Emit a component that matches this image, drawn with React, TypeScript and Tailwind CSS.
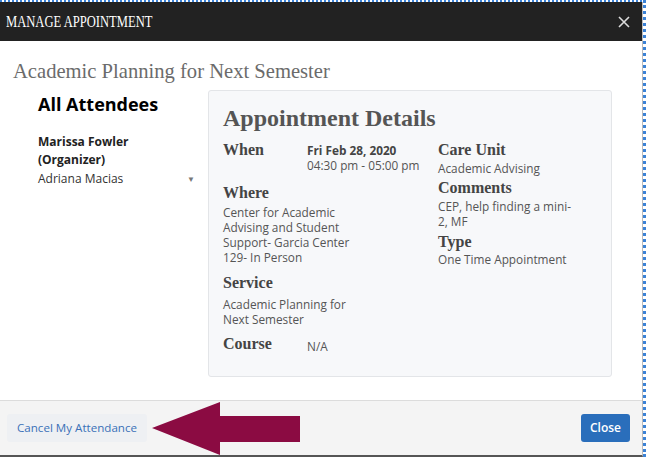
import React from 'react';

const slab = { fontFamily: '"Liberation Serif", "DejaVu Serif", serif' };

const Label: React.FC<{ children: React.ReactNode; className?: string }> = ({ children, className = '' }) => (
  <div className={`text-[16px] font-bold text-[#444] leading-[18px] ${className}`} style={slab}>
    {children}
  </div>
);

export default function App() {
  return (
    <div
      className="w-[646px] h-[457px] overflow-hidden bg-white border-t-2 border-r-[3px] border-dotted border-[#3b82d6]"
      style={{ fontFamily: '"Open Sans", "Noto Sans", sans-serif' }}
    >
      <div className="flex flex-col h-full border-r border-[#bbb] border-b-2 border-b-[#555]">
        {/* Header */}
        <div className="h-[39px] shrink-0 bg-[#222] flex items-center justify-between pl-[6px] pr-[12px]">
          <span className="inline-block text-white text-[17px] scale-x-[0.74] origin-left" style={slab}>
            MANAGE APPOINTMENT
          </span>
          <svg width="12" height="12" viewBox="0 0 12 12" className="text-[#ddd]">
            <path d="M1 1L11 11M11 1L1 11" stroke="currentColor" strokeWidth="1.6" />
          </svg>
        </div>

        {/* Body */}
        <div className="flex-1 pt-[18px] pl-[13px] pr-[30px]">
          <h1 className="text-[20.6px] text-[#6b6b6b] leading-[24px]" style={slab}>
            Academic Planning for Next Semester
          </h1>
          <div className="flex mt-[7px]">
            <div className="w-[195px] shrink-0 pl-[25px] pt-[2px]">
              <h2 className="text-[18px] font-bold text-black leading-[24px]">All Attendees</h2>
              <div className="mt-[17px] text-[12px] font-bold text-[#222] leading-[18px]">
                Marissa Fowler
                <br />
                (Organizer)
              </div>
              <div className="flex items-center justify-between pr-[13px] text-[12px] text-[#333] leading-[20px]">
                <span>Adriana Macias</span>
                <span className="text-[8px] text-[#777]">▼</span>
              </div>
            </div>

            <div className="w-[404px] h-[287px] bg-[#f7f8fa] border border-[#e3e5e8] rounded-[3px] pl-[14px] pt-[12px] flex">
              <div className="w-[215px] shrink-0">
                <h3 className="text-[24px] font-bold text-[#555] leading-[30px] whitespace-nowrap" style={slab}>
                  Appointment Details
                </h3>
                <div className="flex mt-[8px]">
                  <Label className="w-[84px] shrink-0">When</Label>
                  <div className="pt-[2px] text-[11.8px] text-[#555] leading-[15px] whitespace-nowrap">
                    <div className="font-bold text-[#444]">Fri Feb 28, 2020</div>
                    <div>04:30 pm - 05:00 pm</div>
                  </div>
                </div>
                <Label className="mt-[11px]">Where</Label>
                <div className="mt-[3px] text-[11.8px] text-[#555] leading-[15px] w-[140px]">
                  Center for Academic Advising and Student Support- Garcia Center 129- In Person
                </div>
                <Label className="mt-[9px]">Service</Label>
                <div className="mt-[5px] text-[11.8px] text-[#555] leading-[15px] w-[140px]">
                  Academic Planning for Next Semester
                </div>
                <div className="flex mt-[8px]">
                  <Label className="w-[84px] shrink-0">Course</Label>
                  <div className="pt-[4px] text-[11.8px] text-[#555] leading-[15px]">N/A</div>
                </div>
              </div>
              <div className="pt-[38px]">
                <Label>Care Unit</Label>
                <div className="text-[11.8px] text-[#555] leading-[15px] mt-[2px]">Academic Advising</div>
                <Label className="mt-[3px]">Comments</Label>
                <div className="text-[11.8px] text-[#555] leading-[15px] mt-[2px]">
                  CEP, help finding a mini-
                  <br />
                  2, MF
                </div>
                <Label className="mt-[4px]">Type</Label>
                <div className="text-[11.8px] text-[#555] leading-[15px] mt-[1px]">One Time Appointment</div>
              </div>
            </div>
          </div>
        </div>

        {/* Footer */}
        <div className="h-[55px] shrink-0 bg-[#f4f4f4] border-t border-[#dcdcdc] flex items-center justify-between pl-[7px] pr-[12px]">
          <div className="flex items-center">
            <button className="h-[28px] w-[140px] bg-[#eef0f3] rounded-[3px] text-[11.6px] text-[#3a70b8]">
              Cancel My Attendance
            </button>
            <svg width="150" height="53" viewBox="0 0 150 53" className="ml-[5px]">
              <polygon points="0,26 68,0 68,14 148,14 148,40 68,40 68,53" fill="#8b0b42" />
            </svg>
          </div>
          <button className="h-[28px] w-[49px] bg-[#2a6ebb] rounded-[3px] text-[12px] font-semibold text-white">
            Close
          </button>
        </div>
      </div>
    </div>
  );
}
